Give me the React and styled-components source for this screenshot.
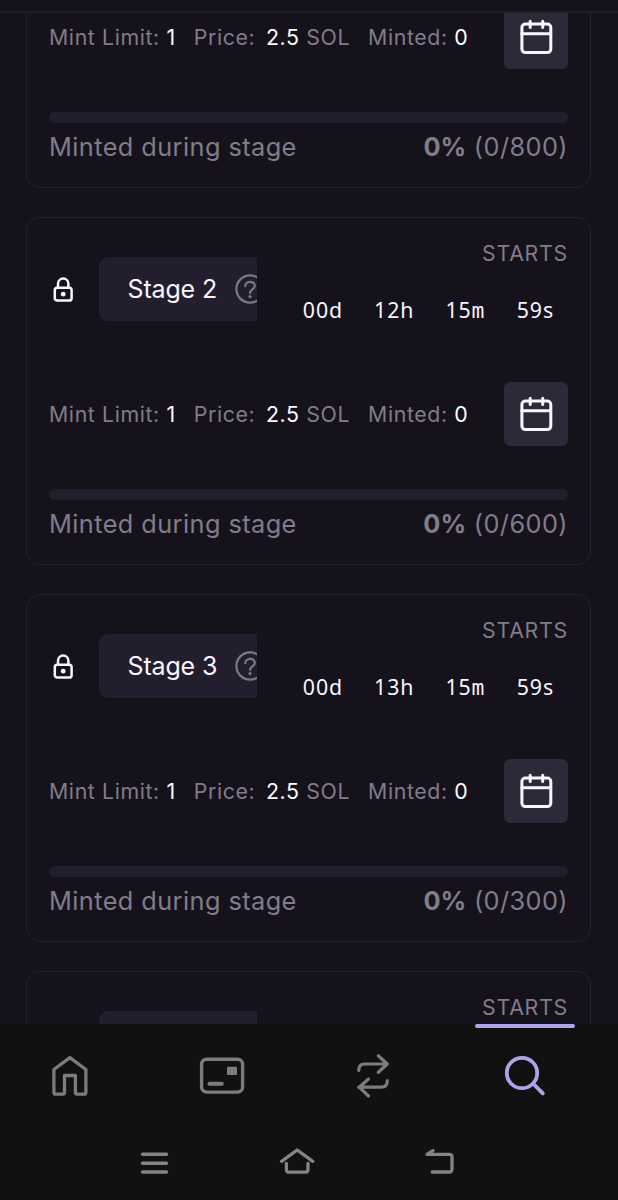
import React from 'react';
import styled, { createGlobalStyle } from 'styled-components';

const GlobalStyle = createGlobalStyle`
    * {
        box-sizing: border-box;
    }
    body {
        margin: 0;
        background: #15121c;
        font-family: Inter, sans-serif;
        overflow: hidden;
    }
    svg {
        display: block;
        flex: none;
    }
    button {
        border: none;
        padding: 0;
        background: none;
        font: inherit;
    }
`;

const Screen = styled.div`
    display: flex;
    flex-direction: column;
    width: 618px;
    height: 1200px;
    background: #15121c;
    color: #f8f5ff;
`;

const TopEdge = styled.div`
    flex: none;
    height: 13px;
    border-bottom: 2px solid #201d28;
`;

const StageScroll = styled.main`
    flex: 1;
    min-height: 0;
    overflow: hidden;
    padding: 0 27px 0 26px;
`;

const StageList = styled.div`
    display: flex;
    flex-direction: column;
    gap: 29px;
    margin-top: -31px;
`;

const Card = styled.section`
    flex: none;
    display: flex;
    flex-direction: column;
    height: ${props => (props.$compact ? '206px' : '348px')};
    padding: 22px 22px 0;
    border: 1px solid #24202c;
    border-radius: 14px;
`;

const CardTop = styled.div`
    display: flex;
    justify-content: space-between;
    height: 142px;
`;

const StageName = styled.div`
    display: flex;
    align-items: center;
    width: 208px;
    height: 64px;
    margin-top: 17px;
    overflow: hidden;
`;

const LockSlot = styled.div`
    flex: none;
    width: 50px;
    padding: 1px 0 0 4px;
`;

const Pill = styled.div`
    flex: none;
    display: flex;
    align-items: center;
    gap: 18px;
    height: 64px;
    padding: 0 28.5px;
    border-radius: 9px;
    background: #221e2d;
    font-size: 25px;
    letter-spacing: -0.15px;
    white-space: nowrap;
`;

const Countdown = styled.div`
    display: flex;
    flex-direction: column;
    align-items: flex-end;
`;

const CountdownLabel = styled.div`
    height: 26px;
    font-size: 21.3px;
    line-height: 26px;
    letter-spacing: 0.75px;
    color: #817c8a;
`;

const Units = styled.div`
    display: grid;
    grid-template-columns: repeat(4, 71.3px);
    margin-top: 30px;
    margin-right: -20px;
    font-family: 'Noto Sans', sans-serif;
    font-size: 21.3px;
    line-height: 28px;
`;

const Unit = styled.span`
    letter-spacing: 0.9px;
    small {
        font-family: ${props => (props.$narrow ? "'DejaVu Sans Mono', monospace" : 'inherit')};
        font-size: inherit;
        letter-spacing: 0;
    }
`;

const InfoRow = styled.div`
    display: flex;
    align-items: center;
    justify-content: space-between;
    height: 64px;
`;

const Facts = styled.div`
    display: flex;
    gap: 18px;
    margin-bottom: 1px;
    font-size: 21.3px;
    letter-spacing: 0.62px;
    color: #817c8a;
    white-space: nowrap;
    b {
        font-weight: 400;
        color: #fffcff;
    }
`;

const Amount = styled.b`
    margin-left: 4px;
`;

const CalendarButton = styled.button`
    display: flex;
    align-items: center;
    justify-content: center;
    width: 64px;
    height: 64px;
    border-radius: 6px;
    background: #2d2939;
    color: #f8f5ff;
`;

const Track = styled.div`
    height: 11px;
    margin-top: 43px;
    border-radius: 6px;
    background: #221e2d;
`;

const Progress = styled.div`
    display: flex;
    justify-content: space-between;
    margin-top: 9px;
    font-size: 25.3px;
    line-height: 30px;
    letter-spacing: 0.43px;
    color: #817c8a;
    b {
        font-weight: 700;
        letter-spacing: 0.1px;
    }
`;

const BottomBar = styled.footer`
    flex: none;
    height: 176px;
    background: #111111;
`;

const Tabs = styled.nav`
    display: grid;
    grid-template-columns: repeat(4, 151.7px);
    height: 104px;
    margin-left: -6px;
`;

const Tab = styled.button`
    display: flex;
    flex-direction: column;
    align-items: center;
    color: ${props => (props.$active ? '#b2a2ec' : '#7c7c7c')};
    &::before {
        content: '';
        width: 100px;
        height: 4px;
        margin-bottom: 24px;
        border-radius: 2px;
        background: ${props => (props.$active ? '#b2a2ec' : 'transparent')};
    }
`;

const SystemKeys = styled.div`
    display: flex;
    justify-content: space-between;
    width: 314px;
    margin: 20px 0 0 140px;
    color: #858585;
`;

const Icon = ({ w, h, stroke = 3, children }) => (
    <svg
        width={w}
        height={h}
        viewBox={`0 0 ${w} ${h}`}
        fill="none"
        stroke="currentColor"
        strokeWidth={stroke}
        strokeLinecap="round"
        strokeLinejoin="round"
    >
        {children}
    </svg>
);

const LockIcon = () => (
    <Icon w={20} h={26} stroke={2.5}>
        <rect x="1.8" y="10.8" width="16.8" height="12.8" rx="2.4" />
        <path d="M5 10.5V6.8a5.2 5.2 0 0 1 10.4 0v3.7" />
        <circle cx="10.2" cy="17.2" r="2.4" fill="currentColor" stroke="none" />
    </Icon>
);

const HelpIcon = () => (
    <Icon w={30} h={30} stroke={2.2}>
        <g stroke="#7d7886">
            <circle cx="15" cy="15" r="13.6" />
            <path d="M10.3 12.2c0-2.6 2-4.4 4.8-4.4 2.7 0 4.7 1.7 4.7 4.1 0 3.5-4.7 3.6-4.7 7" />
        </g>
        <circle cx="15" cy="22.6" r="1.6" fill="#7d7886" stroke="none" />
    </Icon>
);

const CalendarIcon = () => (
    <Icon w={34} h={36} stroke={3}>
        <rect x="2.9" y="5" width="28.9" height="28.6" rx="3.5" />
        <path d="M2.9 14.7h28.9M11.2 2.2v6.3M23.7 2.2v6.3" />
    </Icon>
);

const HomeIcon = () => (
    <Icon w={40} h={48} stroke={3.3}>
        <path d="M3.9 17.5 19.9 5.7l16 11.8v22.7a2 2 0 0 1-2 2h-6.5a2 2 0 0 1-2-2V23.5H14.5v16.7a2 2 0 0 1-2 2H5.9a2 2 0 0 1-2-2z" />
    </Icon>
);

const CardIcon = () => (
    <Icon w={46} h={48} stroke={3.4}>
        <rect x="2.6" y="7.3" width="41" height="32.8" rx="5" />
        <path d="M10.4 31.8h12.4" strokeWidth="4" />
        <rect x="28" y="14.8" width="10" height="8.2" rx="1" fill="currentColor" stroke="none" />
    </Icon>
);

const SwapIcon = () => (
    <Icon w={34} h={48} stroke={3.2}>
        <path d="M2.7 18.5c0-4.5 2-6.5 6-6.5h22.6M22.3 3.8l9 8.2-9 8.3" />
        <path d="M31.3 28.5c0 4.5-2 6.7-6 6.7H2.7M12.5 27l-9.3 8.2 9.3 8.8" />
    </Icon>
);

const SearchIcon = () => (
    <Icon w={42} h={48} stroke={3.8}>
        <circle cx="18" cy="21" r="15.2" />
        <path d="M29.5 32 38.8 41.4" />
    </Icon>
);

const MenuKeyIcon = () => (
    <Icon w={30} h={30} stroke={3.4}>
        <path d="M2.5 6.3h24M2.5 15.3h24M2.5 24h24" />
    </Icon>
);

const HomeKeyIcon = () => (
    <Icon w={36} h={30} stroke={3.3}>
        <path d="M2.6 13.3 18.2 2l15.6 11.3" />
        <path d="M7.4 15.5v6.2a2.5 2.5 0 0 0 2.5 2.5h16.6a2.5 2.5 0 0 0 2.5-2.5v-6.2" />
    </Icon>
);

const BackKeyIcon = () => (
    <Icon w={30} h={30} stroke={3.3}>
        <path d="M9 2.7 3 6.3h22.5a2.5 2.5 0 0 1 2.5 2.5V21.5a2.5 2.5 0 0 1-2.5 2.5H8.2" />
    </Icon>
);

// the first stage is scrolled past its header
const stages = [
    { compact: true, supply: 800 },
    { name: 'Stage 2', time: ['00', '12', '15', '59'], supply: 600 },
    { name: 'Stage 3', time: ['00', '13', '15', '59'], supply: 300 },
];

const StageHeader = ({ name, time }) => (
    <CardTop>
        <StageName>
            <LockSlot>{name && <LockIcon />}</LockSlot>
            <Pill>
                {name}
                <HelpIcon />
            </Pill>
        </StageName>
        <Countdown>
            <CountdownLabel>STARTS</CountdownLabel>
            {time && (
                <Units>
                    {['d', 'h', 'm', 's'].map((unit, i) => (
                        <Unit key={unit} $narrow={unit === 'm'}>
                            {time[i]}<small>{unit}</small>
                        </Unit>
                    ))}
                </Units>
            )}
        </Countdown>
    </CardTop>
);

const StageCard = ({ stage }) => (
    <Card $compact={stage.compact}>
        {!stage.compact && <StageHeader name={stage.name} time={stage.time} />}
        <InfoRow>
            <Facts>
                <span>Mint Limit: <b>1</b></span>
                <span>Price: <Amount>2.5</Amount> SOL</span>
                <span>Minted: <b>0</b></span>
            </Facts>
            <CalendarButton aria-label="Add to calendar">
                <CalendarIcon />
            </CalendarButton>
        </InfoRow>
        <Track />
        <Progress>
            <span>Minted during stage</span>
            <span><b>0%</b> (0/{stage.supply})</span>
        </Progress>
    </Card>
);

// next stage, still loading below the fold
const PendingCard = () => (
    <Card>
        <StageHeader />
    </Card>
);

// wide enough for the cropped pill to keep its full width
const PendingList = styled.div`
    ${Pill} {
        width: 208px;
    }
`;

const App = () => (
    <Screen>
        <GlobalStyle />
        <TopEdge />
        <StageScroll>
            <StageList>
                {stages.map(stage => <StageCard key={stage.supply} stage={stage} />)}
                <PendingList>
                    <PendingCard />
                </PendingList>
            </StageList>
        </StageScroll>
        <BottomBar>
            <Tabs>
                <Tab aria-label="Home"><HomeIcon /></Tab>
                <Tab aria-label="Wallet"><CardIcon /></Tab>
                <Tab aria-label="Swap"><SwapIcon /></Tab>
                <Tab aria-label="Search" $active><SearchIcon /></Tab>
            </Tabs>
            <SystemKeys>
                <MenuKeyIcon />
                <HomeKeyIcon />
                <BackKeyIcon />
            </SystemKeys>
        </BottomBar>
    </Screen>
);

export default App;
